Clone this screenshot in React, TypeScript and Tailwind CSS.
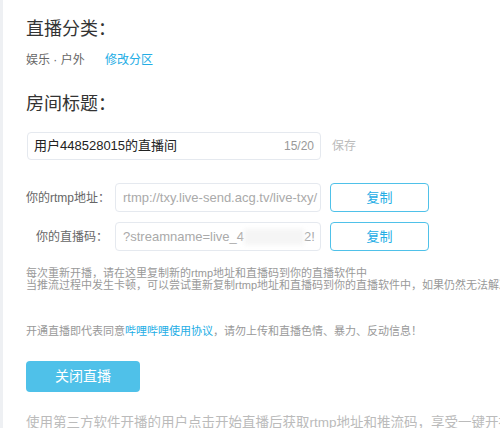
export default function App() {
  return (
    <div className="w-[500px] h-[428px] overflow-hidden bg-white border-l-[3px] border-[#eef0f3] font-['Liberation_Sans','Noto_Sans_CJK_SC',sans-serif]">
      <div className="pl-[23px] pt-[17px] whitespace-nowrap">
        {/* 直播分类 */}
        <h2 className="text-[18px] leading-[24px] text-[#333]">直播分类：</h2>
        <div className="mt-[11px] flex items-center text-[12px] leading-[16px]">
          <span className="w-[79px] text-[#666]">娱乐 · 户外</span>
          <a href="#" className="text-[#23ade5]">修改分区</a>
        </div>

        {/* 房间标题 */}
        <h2 className="mt-[24px] text-[18px] leading-[24px] text-[#333]">房间标题：</h2>
        <div className="mt-[16px] flex items-center">
          <div className="ml-px w-[294px] h-[28px] flex items-center justify-between px-[6px] border border-[#e5e9ef] rounded-[4px]">
            <span className="text-[13px] text-[#222]">用户448528015的直播间</span>
            <span className="text-[12px] text-[#999]">15/20</span>
          </div>
          <button className="ml-[11px] text-[12px] text-[#bbb]">保存</button>
        </div>

        {/* rtmp */}
        <div className="mt-[23px] flex items-center">
          <span className="w-[82px] text-right text-[12px] text-[#666]">你的rtmp地址：</span>
          <div className="ml-[7px] w-[206px] h-[29px] flex items-center px-[7px] border border-[#e5e9ef] rounded-[4px] overflow-hidden text-[13px] text-[#aaa]">
            <span className="shrink-0">rtmp://txy.live-send.acg.tv/live-txy/</span>
          </div>
          <button className="ml-[9px] w-[99px] h-[29px] border border-[#4fc1e9] rounded-[4px] text-[13px] text-[#23ade5]">复制</button>
        </div>
        <div className="mt-[10px] flex items-center">
          <span className="w-[82px] text-right text-[12px] text-[#666]">你的直播码：</span>
          <div className="ml-[7px] w-[206px] h-[29px] flex items-center px-[7px] border border-[#e5e9ef] rounded-[4px] overflow-hidden text-[13px] text-[#aaa]">
            <span className="shrink-0">?streamname=live_4</span>
            <span className="shrink-0 w-[60px] h-[16px] bg-[#f5f5f5] blur-[2px]" />
            <span className="shrink-0">2!</span>
          </div>
          <button className="ml-[9px] w-[99px] h-[29px] border border-[#4fc1e9] rounded-[4px] text-[13px] text-[#23ade5]">复制</button>
        </div>

        {/* tips */}
        <div className="mt-[16px] text-[11px] leading-[12px] text-[#999]">
          <p>每次重新开播，请在这里复制新的rtmp地址和直播码到你的直播软件中</p>
          <p>当推流过程中发生卡顿，可以尝试重新复制rtmp地址和直播码到你的直播软件中，如果仍然无法解决，请联系客服</p>
        </div>
        <p className="mt-[34px] text-[11px] leading-[12px] text-[#999]">
          开通直播即代表同意<a href="#" className="text-[#23ade5]">哔哩哔哩使用协议</a>，请勿上传和直播色情、暴力、反动信息！
        </p>

        <button className="mt-[24px] w-[114px] h-[31px] rounded-[4px] bg-[#4fc1e9] text-white text-[14px]">关闭直播</button>

        <p className="mt-[24px] text-[13.5px] leading-[14px] text-[#bbb]">
          使用第三方软件开播的用户点击开始直播后获取rtmp地址和推流码，享受一键开播的便捷
        </p>
      </div>
    </div>
  )
}
